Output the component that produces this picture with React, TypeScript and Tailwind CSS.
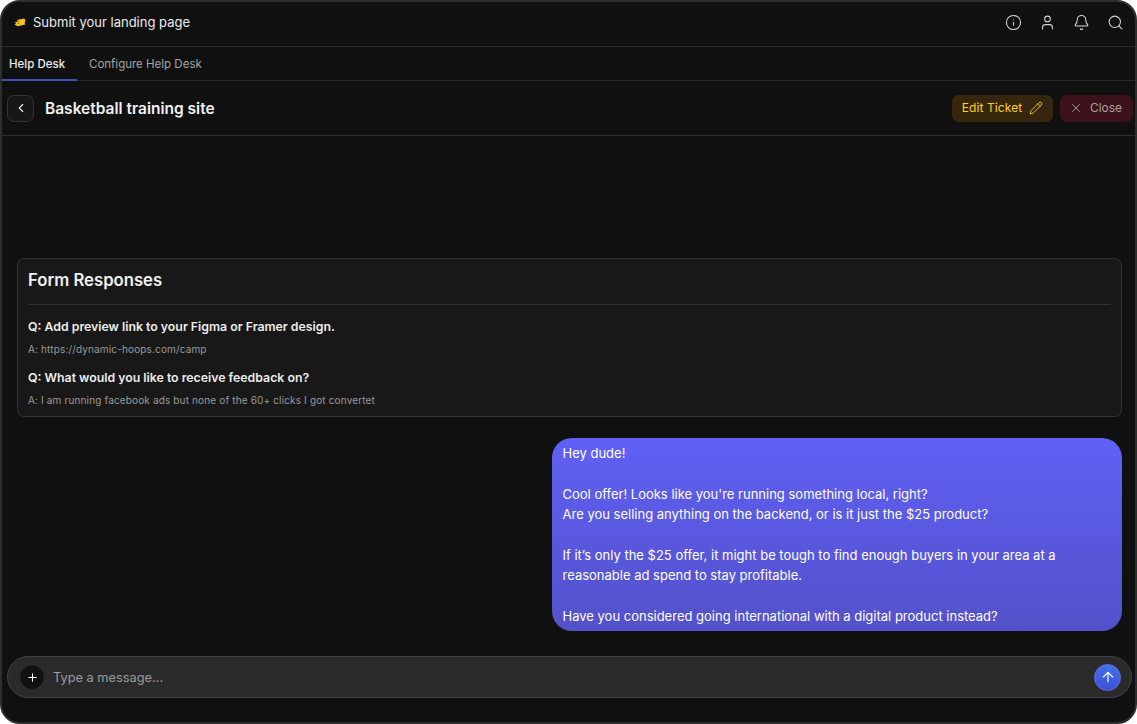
import { ArrowUp, Bell, ChevronLeft, Info, Pencil, Plus, Search, User, X } from "lucide-react"

const TicketLogo = () => (
  <svg width="12" height="10" viewBox="0 0 12 10">
    <path d="M3.5 1.8 L10.5 0.6 L11.5 3 L10.6 4.6 L11.2 6.4 L3.6 8.2 L0.5 6.6 L2.2 5.6 L0.6 4.4 L3 3.8 Z" fill="#f5c518" />
    <path d="M3.4 3.4 L5 3 M3.6 5.6 L5.2 5.2" stroke="#7a5c00" strokeWidth="1" />
  </svg>
)

const responses = [
  { q: "Q: Add preview link to your Figma or Framer design.", a: "A: https://dynamic-hoops.com/camp" },
  { q: "Q: What would you like to receive feedback on?", a: "A: I am running facebook ads but none of the 60+ clicks I got convertet" },
]

export default function App() {
  return (
    <div className="w-[1137px] h-[724px] bg-white overflow-hidden font-['Inter',sans-serif]">
      <div className="w-full h-full flex flex-col bg-[#101010] border-2 border-[#2e2e2e] rounded-[20px] overflow-hidden text-white">
        {/* top bar */}
        <header className="h-[45px] shrink-0 flex items-center justify-between pl-[12px] pr-[11px] pb-[3px] border-b border-[#2a2a2a]">
          <div className="flex items-center gap-[7px]">
            <TicketLogo />
            <span className="text-[13px] text-[#ececec]">Submit your landing page</span>
          </div>
          <div className="flex items-center gap-[17px] text-[#d4d4d4]">
            <Info size={17} strokeWidth={1.5} />
            <User size={17} strokeWidth={1.5} />
            <Bell size={17} strokeWidth={1.5} />
            <Search size={17} strokeWidth={1.5} />
          </div>
        </header>

        {/* tabs */}
        <nav className="h-[34px] shrink-0 flex text-[11.5px] border-b border-[#2a2a2a]">
          <div className="w-[75px] h-[34px] pl-[7px] pt-[3px] flex items-center font-medium text-[#ececec] border-b-2 border-[#3f51b5]">
            Help Desk
          </div>
          <div className="px-3 pt-[2px] flex items-center text-[#a3a3a3]">Configure Help Desk</div>
        </nav>

        {/* ticket title */}
        <div className="h-[55px] shrink-0 flex items-center justify-between pl-[5px] pr-[2px] border-b border-[#2e2e2e]">
          <div className="flex items-center gap-[11px]">
            <button className="w-[27px] h-[27px] flex items-center justify-center rounded-[7px] bg-[#171717] border border-[#333333] text-[#e5e5e5]">
              <ChevronLeft size={14} />
            </button>
            <h1 className="text-[15.5px] leading-[28px] pt-px font-semibold text-[#f0f0f0]">Basketball training site</h1>
          </div>
          <div className="flex items-center gap-[7px] text-[12px]">
            <button className="h-[27px] w-[101px] flex items-center justify-center gap-[7px] rounded-[7px] bg-[#36260e] text-[#fdd418] tracking-[0.1px]">
              Edit Ticket
              <Pencil size={14} strokeWidth={1.5} />
            </button>
            <button className="h-[27px] w-[73px] pr-[2px] flex items-center justify-center gap-[7px] rounded-[7px] bg-[#3d1119] text-[#a8a29e]">
              <X size={14} strokeWidth={1.5} />
              Close
            </button>
          </div>
        </div>

        {/* conversation */}
        <main className="flex-1 flex flex-col justify-end gap-[21px] pl-[15px] pr-[13px] pb-[25px]">
          <section className="h-[159px] rounded-[7px] bg-[#181818] border border-[#333333] px-[10px]">
            <h2 className="h-[46px] pb-[2px] flex items-center text-[16.7px] font-semibold text-[#f0f0f0] border-b border-[#333333]">
              Form Responses
            </h2>
            <div className="pt-[14px] flex flex-col gap-[15px]">
              {responses.map((r) => (
                <div key={r.q} className="flex flex-col gap-[8px]">
                  <p className="text-[12.3px] leading-[16px] font-semibold text-[#ececec]">{r.q}</p>
                  <p className="text-[10px] leading-[12px] tracking-[0.15px] text-[#9a9a9a]">{r.a}</p>
                </div>
              ))}
            </div>
          </section>

          <div className="self-end w-[570px] h-[193px] rounded-[20px] bg-gradient-to-b from-[#6060f6] to-[#5351c9] pl-[10.5px] pr-[10px] pt-[5px] text-[13px] leading-[20.4px] text-white">
            <p>Hey dude!</p>
            <br />
            <p>Cool offer! Looks like you're running something local, right?</p>
            <p>Are you selling anything on the backend, or is it just the $25 product?</p>
            <br />
            <p>If it’s only the $25 offer, it might be tough to find enough buyers in your area at a</p>
            <p>reasonable ad spend to stay profitable.</p>
            <br />
            <p>Have you considered going international with a digital product instead?</p>
          </div>
        </main>

        {/* composer */}
        <div className="shrink-0 pl-[5px] pr-[3px] pb-[24px]">
          <div className="h-[42px] flex items-center justify-between pl-[11px] pr-[10px] rounded-full bg-[#2a2a2a] border border-[#414141]">
            <div className="flex items-center gap-[8px]">
              <button className="w-[26px] h-[26px] flex items-center justify-center rounded-full bg-[#111111] border border-[#2f2f2f] text-white">
                <Plus size={13} strokeWidth={2} />
              </button>
              <span className="text-[12.8px] pt-px text-[#9b9b9b]">Type a message...</span>
            </div>
            <button className="w-[27px] h-[27px] flex items-center justify-center rounded-full bg-gradient-to-b from-[#4470ea] to-[#3a52d4] border border-[#6a6ae0] text-white">
              <ArrowUp size={16} strokeWidth={1.75} />
            </button>
          </div>
        </div>
      </div>
    </div>
  )
}
